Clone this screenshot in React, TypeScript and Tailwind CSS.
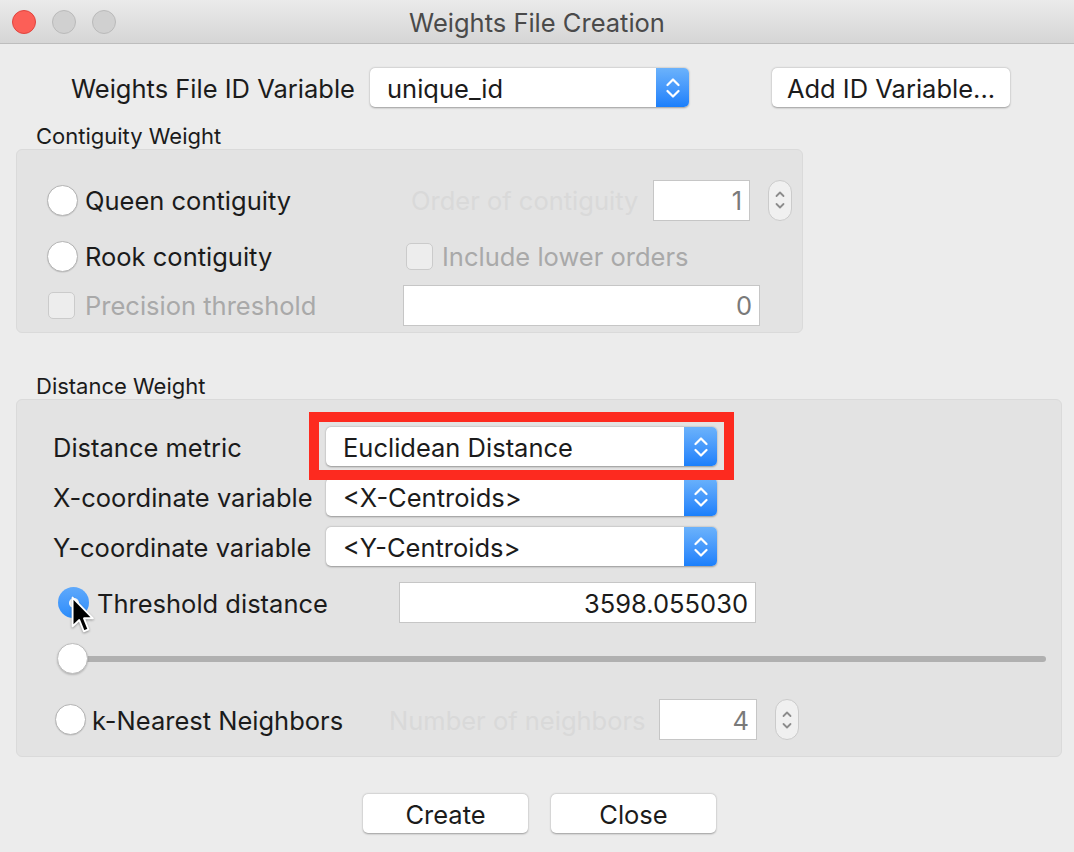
import React from "react";

const FONT = "font-['Inter','Helvetica_Neue',Arial,sans-serif]";

function BlueChevrons() {
  return (
    <svg width="14" height="22" viewBox="0 0 14 22" fill="none">
      <path d="M1.5 8 L7 2.5 L12.5 8" stroke="white" strokeWidth="2.2" strokeLinecap="round" strokeLinejoin="round" />
      <path d="M1.5 14 L7 19.5 L12.5 14" stroke="white" strokeWidth="2.2" strokeLinecap="round" strokeLinejoin="round" />
    </svg>
  );
}

function Select({ text, w, h = 39 }: { text: string; w: string; h?: number }) {
  return (
    <div
      className={`${w} flex items-stretch rounded-[5px] bg-white shadow-[0_0.5px_2px_rgba(0,0,0,0.35)]`}
      style={{ height: h }}
    >
      <div className="flex-1 flex items-center pl-[17px] pt-[2px] text-[25.5px] text-[#1b1b1b]">{text}</div>
      <div className="w-[33px] rounded-r-[5px] bg-gradient-to-b from-[#6bb2fb] to-[#1a7ffb] flex items-center justify-center">
        <BlueChevrons />
      </div>
    </div>
  );
}

function Radio({ checked = false }: { checked?: boolean }) {
  if (checked) {
    return (
      <div className="w-[31px] h-[31px] rounded-full bg-gradient-to-b from-[#5fa9fb] to-[#2a8cfb] flex items-center justify-center shrink-0">
        <div className="w-[10px] h-[10px] rounded-full bg-white" />
      </div>
    );
  }
  return (
    <div className="w-[31px] h-[31px] rounded-full bg-white border border-[#b5b5b5] shadow-[0_0.5px_1px_rgba(0,0,0,0.15)] shrink-0" />
  );
}

function Checkbox() {
  return <div className="w-[27px] h-[27px] rounded-[5px] bg-[#ededed] border border-[#cbcbcb] shrink-0" />;
}

function NumBox({ value, w, dark = false }: { value: string; w: string; dark?: boolean }) {
  return (
    <div
      className={`${w} h-[41px] bg-white border border-[#c6c6c6] flex items-center justify-end pr-[7px] pt-[2px] text-[25.5px] ${
        dark ? "text-[#1b1b1b]" : "text-[#7a7a7a]"
      }`}
    >
      {value}
    </div>
  );
}

function Stepper() {
  return (
    <div className="w-[24px] h-[41px] rounded-full bg-[#f0f0f0] border border-[#cbcbcb] flex items-center justify-center">
      <svg width="10" height="24" viewBox="0 0 10 24" fill="none">
        <path d="M1.5 8 L5 4.5 L8.5 8" stroke="#8c8c8c" strokeWidth="1.8" strokeLinecap="round" strokeLinejoin="round" />
        <path d="M1.5 16 L5 19.5 L8.5 16" stroke="#8c8c8c" strokeWidth="1.8" strokeLinecap="round" strokeLinejoin="round" />
      </svg>
    </div>
  );
}

function Button({ label, w }: { label: string; w: string }) {
  return (
    <div
      className={`${w} h-[39px] rounded-[5px] bg-white shadow-[0_0.5px_2px_rgba(0,0,0,0.35)] flex items-center justify-center pt-[2px] text-[25.5px] text-[#1b1b1b]`}
    >
      {label}
    </div>
  );
}

function Cursor() {
  return (
    <svg
      width="25"
      height="39"
      viewBox="0 0 16 25"
      className="absolute left-[13px] top-[9px] drop-shadow-[0_1px_1px_rgba(0,0,0,0.35)]"
    >
      <path
        d="M1 1 L1 19.5 L5.3 15.4 L8.2 22.6 L11.2 21.4 L8.3 14.3 L14 14.3 Z"
        fill="black"
        stroke="white"
        strokeWidth="1.2"
        strokeLinejoin="round"
      />
    </svg>
  );
}

export default function App() {
  return (
    <div className={`${FONT} leading-[30px] w-[1074px] h-[852px] bg-[#ececec] flex flex-col overflow-hidden`}>
      {/* Title bar */}
      <div className="h-[44px] shrink-0 grid grid-cols-[1fr_auto_1fr] items-center bg-gradient-to-b from-[#ebebeb] to-[#d5d5d5] border-b border-[#bdbdbd]">
        <div className="flex items-center gap-[16px] pl-[12px]">
          <div className="w-[24px] h-[24px] rounded-full bg-[#fc5f57] border border-[#e0443e]" />
          <div className="w-[24px] h-[24px] rounded-full bg-[#d0d0d0] border border-[#bababa]" />
          <div className="w-[24px] h-[24px] rounded-full bg-[#d0d0d0] border border-[#bababa]" />
        </div>
        <div className="pt-[2px] text-[25.5px] text-[#4a4a4a]">Weights File Creation</div>
        <div />
      </div>

      {/* Row 1 */}
      <div className="mt-[24px] flex items-center pl-[71px]">
        <div className="w-[299px] pt-[3px] text-[25.5px] text-[#1b1b1b]">Weights File ID Variable</div>
        <Select text="unique_id" w="w-[319px]" />
        <div className="ml-[83px]">
          <Button label="Add ID Variable..." w="w-[238px]" />
        </div>
      </div>

      {/* Contiguity */}
      <div className="mt-[17px] pl-[36px] text-[22px] leading-[24px] text-[#1b1b1b]">Contiguity Weight</div>
      <div className="mt-[1px] ml-[16px] w-[787px] h-[184px] rounded-[6px] bg-[#e3e3e3] border border-[#dadada] flex flex-col pt-[22px] pl-[30px]">
        <div className="h-[56px] flex items-center">
          <div className="w-[356px] flex items-center gap-[7px]">
            <Radio />
            <span className="pt-[2px] text-[25.5px] text-[#1b1b1b]">Queen contiguity</span>
          </div>
          <div className="ml-[8px] w-[242px] pt-[2px] text-[25.5px] text-[#d9d9d9]">Order of contiguity</div>
          <NumBox value="1" w="w-[97px]" />
          <div className="ml-[18px]">
            <Stepper />
          </div>
        </div>
        <div className="h-[56px] flex items-center">
          <div className="w-[356px] flex items-center gap-[7px]">
            <Radio />
            <span className="pt-[2px] text-[25.5px] text-[#1b1b1b]">Rook contiguity</span>
          </div>
          <div className="ml-[3px] flex items-center gap-[9px]">
            <Checkbox />
            <span className="pt-[2px] text-[25.5px] text-[#a9a9a9]">Include lower orders</span>
          </div>
        </div>
        <div className="h-[42px] flex items-center">
          <div className="w-[356px] flex items-center gap-[10px] pl-[1px]">
            <Checkbox />
            <span className="pt-[2px] text-[25.5px] text-[#a9a9a9]">Precision threshold</span>
          </div>
          <NumBox value="0" w="w-[357px]" />
        </div>
      </div>

      {/* Distance */}
      <div className="mt-[41px] pl-[36px] text-[22px] leading-[24px] text-[#1b1b1b]">Distance Weight</div>
      <div className="mt-[1px] ml-[16px] w-[1046px] h-[358px] rounded-[6px] bg-[#e3e3e3] border border-[#dadada] flex flex-col pt-[27px]">
        <div className="flex items-center pl-[36px]">
          <div className="w-[273px] pt-[2px] text-[25.5px] text-[#1b1b1b]">Distance metric</div>
          <div className="relative">
            <Select text="Euclidean Distance" w="w-[391px]" />
            <div className="absolute left-[-17px] right-[-17px] top-[-15px] bottom-[-14px] border-[10px] border-[#fd2a1f] pointer-events-none" />
          </div>
        </div>
        <div className="mt-[12px] flex items-center pl-[36px]">
          <div className="w-[273px] pt-[2px] text-[25.5px] text-[#1b1b1b]">X-coordinate variable</div>
          <Select text="<X-Centroids>" w="w-[391px]" h={38} />
        </div>
        <div className="mt-[11px] flex items-center pl-[36px]">
          <div className="w-[273px] pt-[2px] text-[25.5px] text-[#1b1b1b]">Y-coordinate variable</div>
          <Select text="<Y-Centroids>" w="w-[391px]" />
        </div>
        <div className="mt-[16px] flex items-center pl-[41px]">
          <div className="w-[341px] flex items-center gap-[8px]">
            <div className="relative">
              <Radio checked />
              <Cursor />
            </div>
            <span className="pt-[2px] text-[25.5px] text-[#1b1b1b]">Threshold distance</span>
          </div>
          <NumBox value="3598.055030" w="w-[357px]" dark />
        </div>
        <div className="mt-[20px] h-[31px] flex items-center pl-[40px] pr-[15px]">
          <div className="w-[31px] h-[31px] rounded-full bg-white border border-[#bdbdbd] shadow-[0_1px_2px_rgba(0,0,0,0.2)] shrink-0 z-10" />
          <div className="flex-1 h-[6px] rounded-r-full bg-[#b0b0b0] ml-[-17px]" />
        </div>
        <div className="mt-[25px] flex items-center pl-[38px]">
          <div className="w-[334px] flex items-center gap-[6px]">
            <Radio />
            <span className="pt-[2px] text-[25.5px] text-[#1b1b1b]">k-Nearest Neighbors</span>
          </div>
          <div className="w-[270px] pt-[2px] text-[25.5px] text-[#d9d9d9]">Number of neighbors</div>
          <NumBox value="4" w="w-[98px]" />
          <div className="ml-[18px]">
            <Stepper />
          </div>
        </div>
      </div>

      {/* Buttons */}
      <div className="mt-[37px] flex pl-[363px] gap-[23px]">
        <Button label="Create" w="w-[165px]" />
        <Button label="Close" w="w-[165px]" />
      </div>
    </div>
  );
}
